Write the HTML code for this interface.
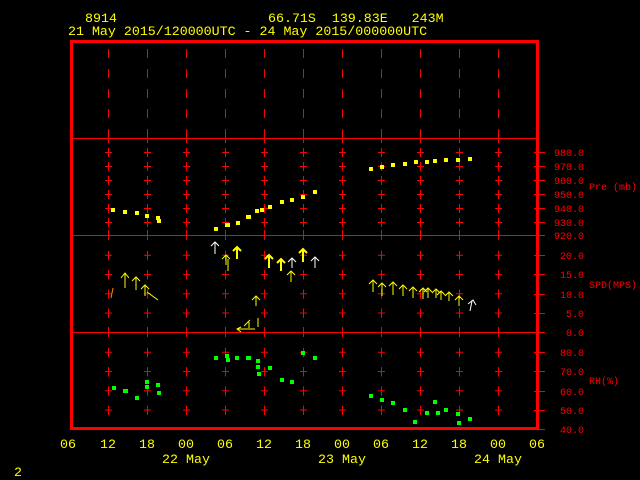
<!DOCTYPE html>
<html><head><style>
html,body{margin:0;padding:0;background:#000;width:640px;height:480px;overflow:hidden}
svg{display:block}
text{font-family:"Liberation Mono",monospace}
</style></head><body>
<svg width="640" height="480" viewBox="0 0 640 480" shape-rendering="crispEdges">
<defs>
<pattern id="dash" patternUnits="userSpaceOnUse" x="89" y="49" width="39" height="20"><line x1="19.5" y1="0" x2="19.5" y2="9" stroke="#f00"/></pattern>
<pattern id="pre" patternUnits="userSpaceOnUse" x="89" y="145" width="39" height="14"><path d="M16 7.5H23M19.5 3V12" stroke="#f00"/></pattern>
<pattern id="spd" patternUnits="userSpaceOnUse" x="89" y="245.4" width="39" height="19.25"><path d="M16 10.1H23M19.5 5.6V14.6" stroke="#f00"/></pattern>
<pattern id="rh" patternUnits="userSpaceOnUse" x="89" y="342.4" width="39" height="19.25"><path d="M16 10.1H23M19.5 5.6V14.6" stroke="#f00"/></pattern>
<pattern id="mid" patternUnits="userSpaceOnUse" x="89" y="0" width="39" height="480"><path d="M16 235.5H23M19.5 230V240M16 332.5H23M19.5 327V337M19.5 133V143" stroke="#f00"/></pattern>
</defs>
<text x="85" y="22" fill="#ff0" font-size="13.3">8914</text>
<text x="268" y="22" fill="#ff0" font-size="13.3" xml:space="preserve">66.71S  139.83E   243M</text>
<text x="68" y="35" fill="#ff0" font-size="13.3">21 May 2015/120000UTC - 24 May 2015/000000UTC</text>
<rect x="89" y="49" width="429" height="89" fill="url(#dash)"/>
<rect x="89" y="145" width="429" height="84" fill="url(#pre)"/>
<rect x="89" y="245" width="429" height="78" fill="url(#spd)"/>
<rect x="89" y="342" width="429" height="78" fill="url(#rh)"/>
<rect x="89" y="0" width="429" height="480" fill="url(#mid)"/>
<path d="M72 138.5H537M72 235.5H537M72 332.5H537" stroke="#f00"/>
<rect x="71.5" y="41.5" width="466" height="387" fill="none" stroke="#f00" stroke-width="3"/>
<path d="M534 152.5h11M534 166.5h11M534 180.5h11M534 194.5h11M534 208.5h11M534 222.5h11M534 235.5h11M534 255.5h11M534 274.5h11M534 294.5h11M534 313.5h11M534 332.5h11M534 352.5h11M534 371.5h11M534 391.5h11M534 410.5h11M534 429.5h11" stroke="#f00"/>
<g fill="#f00" font-size="10" text-anchor="end">
<text x="584" y="156">980.0</text><text x="584" y="170">970.0</text><text x="584" y="184">960.0</text><text x="584" y="198">950.0</text><text x="584" y="212">940.0</text><text x="584" y="226">930.0</text><text x="584" y="239">920.0</text>
<text x="584" y="259">20.0</text><text x="584" y="278">15.0</text><text x="584" y="298">10.0</text><text x="584" y="317">5.0</text><text x="584" y="336">0.0</text>
<text x="584" y="356">80.0</text><text x="584" y="375">70.0</text><text x="584" y="395">60.0</text><text x="584" y="414">50.0</text><text x="584" y="433">40.0</text>
</g>
<g fill="#f00" font-size="10">
<text x="589" y="190" xml:space="preserve">Pre (mb)</text><text x="589" y="288">SPD(MPS)</text><text x="589" y="384">RH(%)</text>
</g>
<g fill="#ff0" font-size="13.3" text-anchor="middle">
<text x="68" y="448">06</text><text x="108" y="448">12</text><text x="147" y="448">18</text><text x="186" y="448">00</text><text x="225" y="448">06</text><text x="264" y="448">12</text><text x="303" y="448">18</text><text x="342" y="448">00</text><text x="381" y="448">06</text><text x="420" y="448">12</text><text x="459" y="448">18</text><text x="498" y="448">00</text><text x="537" y="448">06</text>
<text x="186" y="463">22 May</text><text x="342" y="463">23 May</text><text x="498" y="463">24 May</text>
<text x="18" y="476">2</text>
</g>
<g fill="#ff0">
<rect x="111" y="208" width="4" height="4"/><rect x="123" y="210" width="4" height="4"/><rect x="135" y="211" width="4" height="4"/><rect x="145" y="214" width="4" height="4"/><rect x="156" y="216" width="4" height="4"/><rect x="157" y="219" width="4" height="4"/>
<rect x="214" y="227" width="4" height="4"/><rect x="225" y="223" width="5" height="4"/><rect x="236" y="221" width="4" height="4"/><rect x="246" y="215" width="5" height="4"/><rect x="255" y="209" width="4" height="4"/><rect x="260" y="208" width="4" height="4"/><rect x="268" y="205" width="4" height="4"/><rect x="280" y="200" width="4" height="4"/><rect x="290" y="198" width="4" height="4"/><rect x="301" y="195" width="4" height="4"/><rect x="313" y="190" width="4" height="4"/>
<rect x="369" y="167" width="4" height="4"/><rect x="380" y="165" width="4" height="4"/><rect x="391" y="163" width="4" height="4"/><rect x="403" y="162" width="4" height="4"/><rect x="414" y="160" width="4" height="4"/><rect x="425" y="160" width="4" height="4"/><rect x="433" y="159" width="4" height="4"/><rect x="444" y="158" width="4" height="4"/><rect x="456" y="158" width="4" height="4"/><rect x="468" y="157" width="4" height="4"/>
</g>
<g fill="#0f0">
<rect x="112" y="386" width="4" height="4"/><rect x="123" y="389" width="5" height="4"/><rect x="135" y="396" width="4" height="4"/><rect x="145" y="380" width="4" height="4"/><rect x="145" y="385" width="4" height="4"/><rect x="156" y="383" width="4" height="4"/><rect x="157" y="391" width="4" height="4"/>
<rect x="214" y="356" width="4" height="4"/><rect x="225" y="354" width="4" height="4"/><rect x="226" y="358" width="4" height="4"/><rect x="235" y="356" width="4" height="4"/><rect x="246" y="356" width="5" height="4"/><rect x="256" y="359" width="4" height="4"/><rect x="256" y="365" width="4" height="4"/><rect x="257" y="372" width="4" height="4"/><rect x="268" y="366" width="4" height="4"/><rect x="280" y="378" width="4" height="4"/><rect x="290" y="380" width="4" height="4"/><rect x="301" y="351" width="4" height="4"/><rect x="313" y="356" width="4" height="4"/>
<rect x="369" y="394" width="4" height="4"/><rect x="380" y="398" width="4" height="4"/><rect x="391" y="401" width="4" height="4"/><rect x="403" y="408" width="4" height="4"/><rect x="413" y="420" width="4" height="4"/><rect x="425" y="411" width="4" height="4"/><rect x="433" y="400" width="4" height="4"/><rect x="436" y="411" width="4" height="4"/><rect x="444" y="408" width="4" height="4"/><rect x="456" y="412" width="4" height="4"/><rect x="457" y="421" width="4" height="4"/><rect x="468" y="417" width="4" height="4"/>
</g>
<g fill="none" stroke="#ff0" shape-rendering="auto">
<path d="M215 254V242M211 246L215 242L219 246" stroke="#fff"/>
<path d="M226 265V255M222 259L226 255L230 259M228 271V259"/>
<path d="M237 259V247M233 251L237 247L241 251" stroke-width="2"/>
<path d="M256 306V296M252 300L256 296L260 300"/>
<path d="M269 268V255M265 259L269 255L273 259" stroke-width="2"/>
<path d="M281 271V259M277 263L281 259L285 263" stroke-width="2"/>
<path d="M292 268V258M288 262L292 258L296 262" stroke="#fff"/>
<path d="M291 282V271M287 275L291 271L295 275"/>
<path d="M303 262V249M299 253L303 249L307 253" stroke-width="2"/>
<path d="M315 268V257M311 261L315 257L319 261" stroke="#fff"/>
<path d="M125 288V273M121 278L125 273L129 278"/>
<path d="M136 290V277M132 281L136 277L140 281"/>
<path d="M145 296V285M141 289L145 285L149 289M147 292L158 300"/>
<path d="M111 298L113 288" stroke="#f80"/>
<path d="M237 329H255M241 327L237 329L241 332M244 326L250 320M249 328V322M258 327V318"/>
<path d="M373 292V280M369 284L373 280L377 284M382 296V283M378 287L382 283L386 287M393 295V282M389 286L393 282L397 286M403 296V285M399 289L403 285L407 289M413 298V287M409 291L413 287L417 291"/>
<path d="M423 299V288M419 292L423 288L427 292M428 298V288M424 292L428 288L432 292M436 298V289M432 293L436 289L440 293M441 300V291M437 295L441 291L445 295M449 301V292M445 296L449 292L453 296M459 306V296M455 300L459 296L463 300"/>
<path d="M470 311L472 301M468 304L473 300L476 305" stroke="#fff"/>
</g>
</svg>
</body></html>
